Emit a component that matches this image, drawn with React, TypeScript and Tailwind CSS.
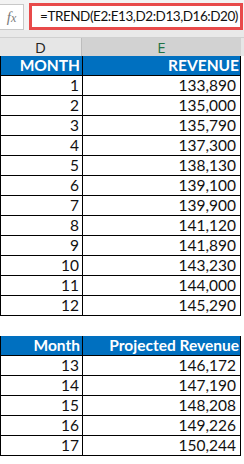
import React from "react";

const data1: [string, string][] = [
  ["1", "133,890"],
  ["2", "135,000"],
  ["3", "135,790"],
  ["4", "137,300"],
  ["5", "138,130"],
  ["6", "139,100"],
  ["7", "139,900"],
  ["8", "141,120"],
  ["9", "141,890"],
  ["10", "143,230"],
  ["11", "144,000"],
  ["12", "145,290"],
];

const data2: [string, string][] = [
  ["13", "146,172"],
  ["14", "147,190"],
  ["15", "148,208"],
  ["16", "149,226"],
  ["17", "150,244"],
];

function HeaderRow({ a, b }: { a: string; b: string }) {
  return (
    <div className="grid grid-cols-[83px_158px] h-[20px] bg-[#0070c0] text-white font-bold text-[15.5px] leading-[19px]">
      <div className="border-l border-r border-b border-black text-right pr-[2px] whitespace-nowrap">{a}</div>
      <div className="border-r border-b border-black text-right pr-[1px] whitespace-nowrap">{b}</div>
    </div>
  );
}

function DataRow({ a, b }: { a: string; b: string }) {
  return (
    <div className="grid grid-cols-[83px_158px] h-[20px] bg-white text-[#111] text-[15.5px] leading-[19px]">
      <div className="border-l border-r border-b border-black text-right pr-[3px]">{a}</div>
      <div className="border-r border-b border-black text-right pr-[4px]">{b}</div>
    </div>
  );
}

export default function App() {
  return (
    <div className="w-[244px] h-[464px] bg-white overflow-hidden" style={{ fontFamily: "Lato, 'Liberation Sans', sans-serif" }}>
      {/* formula bar */}
      <div className="h-[30px] bg-[#f3f3f3] flex items-start">
        <div className="mt-[4px] w-[24px] h-[26px] bg-white border border-[#c8c8c8] border-l-0 flex items-center justify-center">
          <span className="text-[#7a7a7a] italic text-[15px]" style={{ fontFamily: "'Liberation Serif', serif" }}>
            f<span className="text-[12px]">x</span>
          </span>
        </div>
        <div className="ml-[5px] mt-[3px] w-[214px] h-[27px] bg-white border-[3px] border-[#e84a4a] flex items-center pl-[8px] overflow-hidden">
          <span className="text-[13.5px] tracking-[-0.45px] text-[#111] whitespace-nowrap" style={{ fontFamily: "Lato, sans-serif" }}>
            =TREND(E2:E13,D2:D13,D16:D20)
          </span>
        </div>
      </div>
      {/* gap */}
      <div className="h-[8px] bg-[#e9e9e9] border-b border-[#d0d0d0]" />
      {/* column headers */}
      <div className="grid grid-cols-[82px_159px_3px] h-[18px] text-[15px] leading-[18px]" style={{ fontFamily: "'Open Sans', sans-serif" }}>
        <div className="bg-[#e6e6e6] border-r border-[#bdbdbd] text-center text-[#222]">D</div>
        <div className="bg-[#d2d2d2] text-center text-[#217346]">E</div>
        <div className="bg-[#e6e6e6]" />
      </div>
      {/* tables */}
      <div className="w-[241px]">
        <HeaderRow a="MONTH" b="REVENUE" />
        {data1.map(([a, b]) => (
          <DataRow key={a} a={a} b={b} />
        ))}
        <div className="h-[20px]" />
        <HeaderRow a="Month" b="Projected Revenue" />
        {data2.map(([a, b]) => (
          <DataRow key={a} a={a} b={b} />
        ))}
      </div>
    </div>
  );
}
